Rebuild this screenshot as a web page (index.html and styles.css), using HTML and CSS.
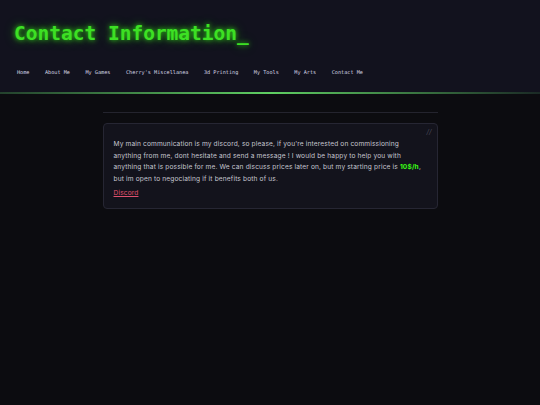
FILE: index.html
```html
<!DOCTYPE html>
<html lang="en">
<head>
    <meta charset="UTF-8">
    <meta name="viewport" content="width=device-width, initial-scale=1.0">
    <title>Contact Information</title>
    <link rel="stylesheet" href="styles.css">
</head>
<body>
    <header class="site-header">
        <h1 class="site-title">Contact Information_</h1>
        <nav class="site-nav">
            <a href="#">Home</a>
            <a href="#">About Me</a>
            <a href="#">My Games</a>
            <a href="#">Cherry's Miscellanea</a>
            <a href="#">3d Printing</a>
            <a href="#">My Tools</a>
            <a href="#">My Arts</a>
            <a href="#">Contact Me</a>
        </nav>
    </header>

    <main class="content">
        <hr class="divider">
        <section class="card">
            <span class="card-mark">//</span>
            <p>My main communication is my discord, so please, if you're interested on commissioning anything from me, dont hesitate and send a message ! I would be happy to help you with anything that is possible for me. We can discuss prices later on, but my starting price is <strong class="price">10$/h</strong>, but im open to negociating if it benefits both of us.</p>
            <a class="card-link" href="#">Discord</a>
        </section>
    </main>
</body>
</html>
```

FILE: styles.css
```css
* {
    margin: 0;
    padding: 0;
    box-sizing: border-box;
}

body {
    font-family: Inter, 'DejaVu Sans', sans-serif;
    background: #0c0c10;
    color: #c9c9d3;
    min-height: 100vh;
}

.site-header {
    position: relative;
    background: #12121e;
    height: 94px;
    padding: 20px 14px 0;
}

/* glowing line under the header */
.site-header::after {
    content: '';
    position: absolute;
    left: 0;
    right: 0;
    bottom: 0;
    height: 2px;
    background: linear-gradient(90deg, rgba(76, 175, 80, 0.3) 0%, #5fcf62 50%, rgba(76, 175, 80, 0.15) 100%);
}

.site-title {
    font-family: 'DejaVu Sans Mono', 'Liberation Mono', monospace;
    font-size: 19.5px;
    font-weight: bold;
    line-height: 28px;
    color: #3de024;
    text-shadow: 0 0 5px rgba(57, 255, 20, 0.8), 0 0 12px rgba(57, 255, 20, 0.4);
}

.site-nav {
    display: flex;
    gap: 15.5px;
    margin-top: 20px;
    padding-left: 3px;
}

.site-nav a {
    font-family: 'DejaVu Sans Mono', 'Liberation Mono', monospace;
    font-size: 5.2px;
    line-height: 8px;
    color: #d4d4e2;
    text-decoration: none;
}

.content {
    max-width: 335px;
    margin: 0 auto;
    padding-top: 18px;
}

.divider {
    border: none;
    border-top: 1px solid #24242e;
    margin-bottom: 10px;
}

.card {
    position: relative;
    background: #13131c;
    border: 1px solid #262633;
    border-radius: 4px;
    padding: 15px 12px 8px 10px;
}

.card-mark {
    position: absolute;
    top: 3px;
    right: 5px;
    font-size: 7px;
    color: #4a4a5a;
    font-style: italic;
}

.card p {
    font-size: 6.6px;
    letter-spacing: 0.14px;
    line-height: 11.7px;
    color: #c6c6d0;
}

.price {
    color: #39ff14;
    font-weight: bold;
}

.card-link {
    display: block;
    width: max-content;
    margin-top: 2px;
    font-size: 6.6px;
    letter-spacing: 0.14px;
    line-height: 11.7px;
    color: #e0506e;
    text-decoration: underline;
}
```
